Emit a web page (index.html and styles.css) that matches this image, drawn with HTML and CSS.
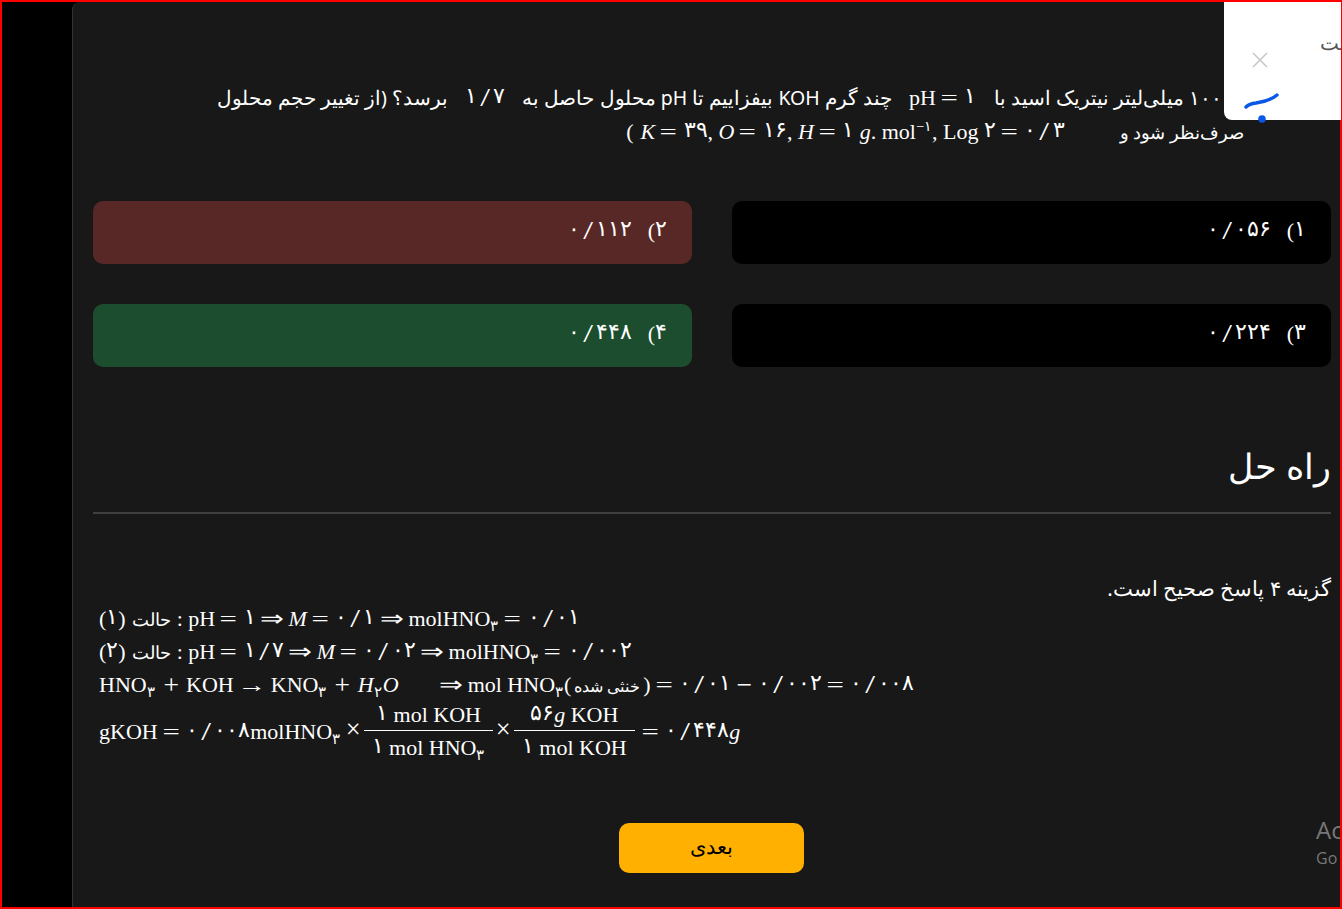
FILE: index.html
```html
<!DOCTYPE html>
<html lang="fa">
<head>
<meta charset="utf-8">
<title>راه حل</title>
<link rel="stylesheet" href="styles.css">
</head>
<body>
<div class="frame">
  <aside class="side"></aside>
  <main class="main">
    <p class="question" dir="rtl">به ۱۰۰ میلی‌لیتر نیتریک اسید با <span class="m q1" dir="ltr">pH<b class="eq">=</b><bdi class="d">۱</bdi></span> چند گرم <span class="lat">KOH</span> بیفزاییم تا <span class="lat">pH</span> محلول حاصل به <span class="m q2" dir="ltr"><bdi class="d">۱</bdi><b class="sl">/</b><bdi class="d">۷</bdi></span> برسد؟ (از تغییر حجم محلول<br><span class="tight">صرف‌نظر شود و</span> <span class="m q3" dir="ltr">(<i class="k">K</i><b class="eq">=</b><bdi class="d">۳۹</bdi>, <i>O</i><b class="eq">=</b><bdi class="d">۱۶</bdi>, <i>H</i><b class="eq">=</b><bdi class="d">۱</bdi> <i>g</i>. mol<sup>−<bdi>۱</bdi></sup>, Log <bdi class="d">۲</bdi><b class="eq">=</b><bdi class="d">۰</bdi><b class="sl">/</b><bdi class="d">۳</bdi></span></p>
    <div class="options" dir="rtl">
      <div class="option"><span class="pre"><bdi class="d">۱</bdi>)</span><span class="val m" dir="ltr"><bdi class="d">۰</bdi><b class="sl">/</b><bdi class="d">۰۵۶</bdi></span></div>
      <div class="option wrong"><span class="pre"><bdi class="d">۲</bdi>)</span><span class="val m" dir="ltr"><bdi class="d">۰</bdi><b class="sl">/</b><bdi class="d">۱۱۲</bdi></span></div>
      <div class="option"><span class="pre"><bdi class="d">۳</bdi>)</span><span class="val m" dir="ltr"><bdi class="d">۰</bdi><b class="sl">/</b><bdi class="d">۲۲۴</bdi></span></div>
      <div class="option right"><span class="pre"><bdi class="d">۴</bdi>)</span><span class="val m" dir="ltr"><bdi class="d">۰</bdi><b class="sl">/</b><bdi class="d">۴۴۸</bdi></span></div>
    </div>
    <h2 class="title" dir="rtl">راه حل</h2>
    <hr class="rule">
    <p class="answer" dir="rtl">گزینه ۴ پاسخ صحیح است.</p>
    <div class="math" dir="ltr">
      <div class="ml">(<bdi class="d">۱</bdi>)<bdi class="ar">حالت</bdi>: pH<b class="eq">=</b><bdi class="d">۱</bdi><b class="ar2">⇒</b><i>M</i><b class="eq">=</b><bdi class="d">۰</bdi><b class="sl">/</b><bdi class="d">۱</bdi><b class="ar2">⇒</b>molHNO<sub><bdi>۳</bdi></sub><b class="eq">=</b><bdi class="d">۰</bdi><b class="sl">/</b><bdi class="d">۰۱</bdi></div>
      <div class="ml">(<bdi class="d">۲</bdi>)<bdi class="ar">حالت</bdi>: pH<b class="eq">=</b><bdi class="d">۱</bdi><b class="sl">/</b><bdi class="d">۷</bdi><b class="ar2">⇒</b><i>M</i><b class="eq">=</b><bdi class="d">۰</bdi><b class="sl">/</b><bdi class="d">۰۲</bdi><b class="ar2">⇒</b>molHNO<sub><bdi>۳</bdi></sub><b class="eq">=</b><bdi class="d">۰</bdi><b class="sl">/</b><bdi class="d">۰۰۲</bdi></div>
      <div class="ml">HNO<sub><bdi>۳</bdi></sub><b class="plus">+</b>KOH<b class="ar2">→</b>KNO<sub><bdi>۳</bdi></sub><b class="plus">+</b><i>H</i><sub><bdi>۲</bdi></sub><i>O</i><span class="gap"></span><b class="ar2">⇒</b>mol HNO<sub><bdi>۳</bdi></sub>(<bdi class="sm">خنثی شده</bdi>)<b class="eq">=</b><bdi class="d">۰</bdi><b class="sl">/</b><bdi class="d">۰۱</bdi><b class="minus">−</b><bdi class="d">۰</bdi><b class="sl">/</b><bdi class="d">۰۰۲</bdi><b class="eq">=</b><bdi class="d">۰</bdi><b class="sl">/</b><bdi class="d">۰۰۸</bdi></div>
      <div class="ml fl"><span class="lead">gKOH<b class="eq">=</b><bdi class="d">۰</bdi><b class="sl">/</b><bdi class="d">۰۰۸</bdi>molHNO<sub><bdi>۳</bdi></sub></span><b class="times">×</b><span class="frac"><span class="num"><bdi class="d">۱</bdi> mol KOH</span><span class="den"><bdi class="d">۱</bdi> mol HNO<sub><bdi>۳</bdi></sub></span></span><b class="times">×</b><span class="frac"><span class="num"><bdi class="d">۵۶</bdi><i>g</i> KOH</span><span class="den"><bdi class="d">۱</bdi> mol KOH</span></span><span class="tail"><b class="eq">=</b><bdi class="d">۰</bdi><b class="sl">/</b><bdi class="d">۴۴۸</bdi><i>g</i></span></div>
    </div>
    <div class="actions"><button class="next" type="button">بعدی</button></div>
  </main>
</div>
<div class="popover">
  <span class="ptext"><span class="pinner">ثبت</span></span>
  <svg class="close" width="16" height="16" viewBox="0 0 16 16"><path d="M1 1L15 15M15 1L1 15" stroke="#c8c8c8" stroke-width="1.6" fill="none"/></svg>
  <svg class="logo" width="36" height="36" viewBox="0 0 36 36"><path d="M3 18C6 15 8 14.500 13 14C20 13 28 11 34 6" stroke="#0b57e6" stroke-width="3.400" stroke-linecap="round" fill="none"/><circle cx="19" cy="30" r="3.800" fill="#0b57e6"/></svg>
</div>
<div class="watermark" lang="en" dir="ltr"><div class="w1">Activate Windows</div><div class="w2">Go to Settings</div></div>
</body>
</html>
```
FILE: styles.css
```css
* { box-sizing: border-box; }
html, body { margin: 0; height: 100%; overflow: hidden; }
body { background: #000; font-family: "Noto Sans", "Open Sans", sans-serif; color: #fff; }
.frame { display: flex; height: 909px; border: 2px solid #f00; background: #000; }
.side { width: 70px; flex: none; }
.main { flex: 1; background: #181818; border-left: 1px solid #333; border-top-left-radius: 8px; padding: 0 9px 0 20px; min-width: 0; }
.question { margin: 79px 0 0; padding-right: 87px; font-size: 19.600px; line-height: 34px; height: 70px; text-align: right; white-space: nowrap; }
.tight { font-size: 18px; }
.lat { font-size: 19.500px; }
.m { font-family: "Liberation Serif", "DejaVu Serif", serif; font-size: 22px; line-height: 1; unicode-bidi: isolate; display: inline-block; margin-block: -8px; }
.q1 { margin-inline: 12px; }
.q2 { margin-inline: 12px; }
.q3 { margin-right: 50px; }
.k { margin-left: 7px; }
b { font-weight: 400; display: inline-block; line-height: 1; }
.d { display: inline-block; vertical-align: 2px; }
.eq { transform: scaleX(1.4); margin: 0 9px 0 7px; }
.sl { transform: scale(1.6, 1.1); margin: 0 5px; }
.ar2 { transform: scaleX(1.3); margin: 0 7.500px; }
.plus { transform: scale(1.25); margin: 0 9px; }
.minus { transform: scale(1.25); margin: 0 7px; }
.times { transform: scale(1.2); margin: 0 4px; }
.ar { font-size: 18px; margin: 0 6px; }
.lead { padding-right: 2px; }
.tail { margin-left: 2px; }
sup { font-size: 65%; line-height: 0; }
sub { font-size: 70%; line-height: 0; margin: 0 1px 0 0; }
.options { display: grid; grid-template-columns: 1fr 1fr; gap: 40px; margin-top: 50px; }
.option { height: 63px; border-radius: 10px; background: #000; padding: 0 25px 6px; display: flex; align-items: center; font-family: "Liberation Serif", serif; font-size: 22px; white-space: pre; }
.option.wrong { background: #582826; }
.option.right { background: #1b4d2e; }
.pre { margin-left: 16px; }
.title { margin: 71px 0 0; font-size: 35px; font-weight: 400; line-height: 56px; height: 74px; text-align: right; }
.rule { margin: 0; border: 0; height: 2px; background: #3f3f3f; }
.answer { margin: 60px 0 0; font-size: 20.500px; line-height: 28px; height: 26px; text-align: right; }
.math { padding-left: 6px; font-family: "Liberation Serif", serif; font-size: 22px; }
.ml { height: 33px; line-height: 33px; white-space: nowrap; }
.ml.fl { height: 62px; display: flex; align-items: center; }
.frac { display: inline-flex; flex-direction: column; align-items: center; line-height: 30px; }
.num { border-bottom: 1px solid #fff; align-self: stretch; text-align: center; }
.den { padding: 0 8px; }
.gap { display: inline-block; width: 36px; }
.sm { font-size: 16px; margin: 0 3px; }
.actions { display: flex; justify-content: center; margin-top: 62px; padding-right: 1px; }
.next { width: 185px; height: 50px; border: 0; border-radius: 10px; background: #ffb000; color: #000; padding: 0 0 5px; font: 400 21px "Noto Sans", sans-serif; }
.popover { position: absolute; top: 2px; right: 1px; width: 117px; height: 118px; background: #fff; border-bottom-left-radius: 8px; }
.ptext { position: absolute; top: 27px; left: 96px; width: 21px; overflow: hidden; color: #555; font-size: 20px; white-space: nowrap; }
.pinner { display: block; width: 21px; text-align: left; }
.close { position: absolute; left: 28px; top: 50px; }
.logo { position: absolute; left: 19px; top: 87px; }
.watermark { position: absolute; left: 1316px; top: 813px; width: 24px; overflow: hidden; color: #777; white-space: nowrap; font-family: "Open Sans", sans-serif; }
.w1 { font-size: 24px; line-height: 33px; }
.w2 { font-size: 16px; line-height: 24px; }
```
